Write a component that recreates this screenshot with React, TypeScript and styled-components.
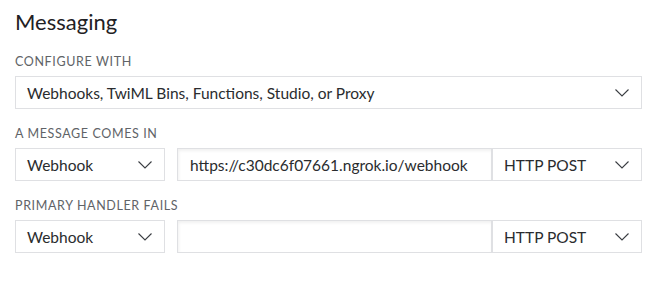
import React from "react";
import styled, { createGlobalStyle } from "styled-components";

const Global = createGlobalStyle`
  html, body { margin: 0; padding: 0; background: #ffffff; }
  body { font-family: Lato, "Open Sans", sans-serif; color: #282a2b; }
  * { box-sizing: border-box; }
`;

const Page = styled.div`
  padding: 9px 22px 0 15px;
  display: flex;
  flex-direction: column;
`;

const Title = styled.h2`
  margin: 0 0 20px;
  font-size: 22px;
  line-height: 26px;
  font-weight: 400;
  color: #1f2124;
`;

const Field = styled.div`
  display: flex;
  flex-direction: column;
  gap: 8px;
  margin-bottom: 18px;
`;

const Label = styled.div`
  font-size: 12.5px;
  line-height: 13px;
  letter-spacing: 0.05em;
  text-transform: uppercase;
  color: #606367;
`;

const Row = styled.div`
  display: flex;
  align-items: stretch;
`;

const SelectBox = styled.div<{ $w?: number; $gap?: number }>`
  ${(p) => (p.$w ? `width: ${p.$w}px; flex: none;` : "flex: 1;")}
  margin-right: ${(p) => p.$gap ?? 0}px;
  height: 33px;
  border: 1px solid #dfe0e3;
  background: #ffffff;
  display: flex;
  align-items: center;
  justify-content: space-between;
  padding: 0 12px 0 11px;
  font-size: 15.5px;
  color: #2a2c2e;
`;

const Input = styled.div`
  flex: 1;
  height: 33px;
  border: 1px solid #dfe0e3;
  background: #ffffff;
  box-shadow: inset 1px 2px 3px rgba(0, 0, 0, 0.06);
  display: flex;
  align-items: center;
  padding: 0 12px;
  font-size: 15.5px;
  color: #2a2c2e;
  white-space: nowrap;
  overflow: hidden;
`;

const Chevron = () => (
  <svg width="14" height="8" viewBox="0 0 14 8" fill="none">
    <path d="M0.5 0.5 L7 7 L13.5 0.5" stroke="#3a3d42" strokeWidth="1.1" />
  </svg>
);

const Select = ({ value, w, gap }: { value: string; w?: number; gap?: number }) => (
  <SelectBox $w={w} $gap={gap}>
    <span>{value}</span>
    <Chevron />
  </SelectBox>
);

export default function App() {
  return (
    <>
      <Global />
      <Page>
        <Title>Messaging</Title>
        <Field>
          <Label>Configure with</Label>
          <Row>
            <Select value="Webhooks, TwiML Bins, Functions, Studio, or Proxy" />
          </Row>
        </Field>
        <Field>
          <Label>A message comes in</Label>
          <Row>
            <Select value="Webhook" w={150} gap={12} />
            <Input>https://c30dc6f07661.ngrok.io/webhook</Input>
            <Select value="HTTP POST" w={150} />
          </Row>
        </Field>
        <Field>
          <Label>Primary handler fails</Label>
          <Row>
            <Select value="Webhook" w={150} gap={12} />
            <Input />
            <Select value="HTTP POST" w={150} />
          </Row>
        </Field>
      </Page>
    </>
  );
}
